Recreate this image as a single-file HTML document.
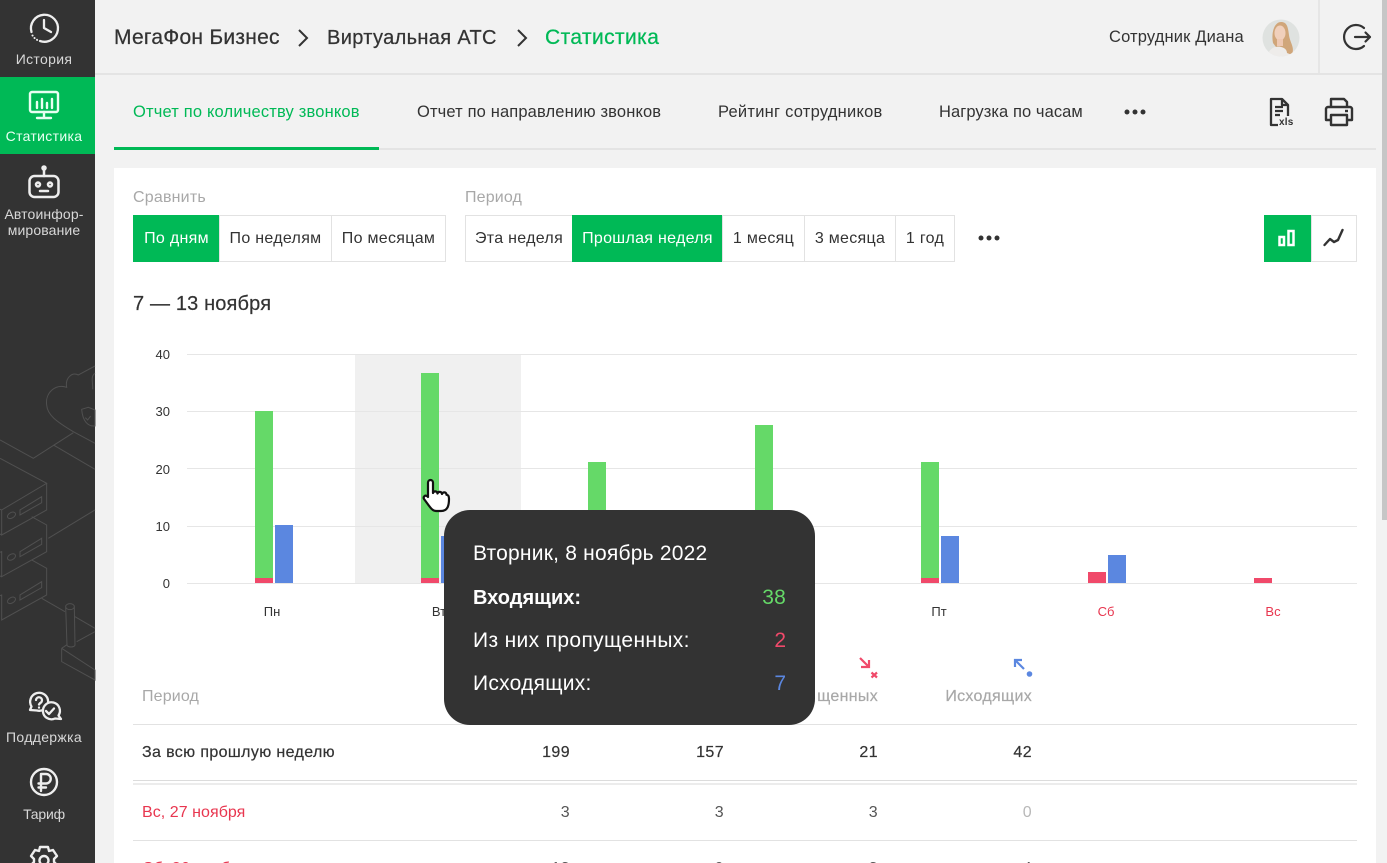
<!DOCTYPE html>
<html lang="ru"><head><meta charset="utf-8"><title>Статистика</title>
<style>
html,body{margin:0;padding:0;width:1387px;height:863px;overflow:hidden;background:#f2f2f2}
body{position:relative;font-family:"Liberation Sans",sans-serif;color:#333}
.t{position:absolute;white-space:nowrap;line-height:1}
.a{position:absolute}
.c{transform:translateX(-50%)}
.r{transform:translateX(-100%)}
.side{color:#d8d8d8;font-size:14px;letter-spacing:.32px}
.btn{position:absolute;top:215px;height:45px;border:1px solid #e2e2e2;background:#fff;box-sizing:content-box;font-size:16px;letter-spacing:.3px;line-height:45px;text-align:center;color:#333;white-space:nowrap}
.on{background:#00b956;border-color:#00b956;color:#fff}
.grid{position:absolute;left:187px;width:1170px;height:1px;background:#e6e6e6}
.b{position:absolute}
.g{background:#65d968}.bl{background:#5b87e0}.rd{background:#f0496a}
.yl{position:absolute;font-size:13px;line-height:1;color:#333;right:1217px}
.num{font-size:16px;letter-spacing:.4px}
svg{position:absolute;overflow:visible}
</style></head><body>

<!-- sidebar -->
<div class="a" style="left:0;top:0;width:95px;height:863px;background:#333"></div>
<div class="a" style="left:0;top:77px;width:95px;height:77px;background:#00b956"></div>
<svg style="left:0;top:350px" width="95" height="330" fill="none" stroke="#505050" stroke-width="1">
<g transform="scale(.3333)" stroke-width="3">
<path d="M285 48L235 75C215 65 195 85 200 112C165 100 135 130 140 165C142 195 170 215 220 245L285 280"/>
<path d="M285 70C270 80 280 100 278 118"/>
<path d="M245 178L265 172L285 180V228C265 230 248 215 245 178ZM256 203L263 210L272 198"/>
<path d="M0 270L100 325L220 248M160 285L285 358"/>
<path d="M0 325L140 400L5 480V555L140 480V400M5 480L0 478"/>
<path d="M60 480L125 440V458L60 495ZM23 502a13 8 -30 1 1 23 -12a13 8 -30 1 1 -23 12"/>
<path d="M95 500L140 525V605L5 680V605L0 607M5 555L0 552"/>
<path d="M60 605L125 565V583L60 620ZM23 627a13 8 -30 1 1 23 -12a13 8 -30 1 1 -23 12"/>
<path d="M145 565L285 480"/>
<path d="M95 630L140 655V735L5 810V735L0 737M5 680L0 678"/>
<path d="M60 735L125 695V713L60 750ZM23 757a13 8 -30 1 1 23 -12a13 8 -30 1 1 -23 12"/>
<path d="M125 745L195 785"/>
<path d="M197 770a13 9 0 0 1 26 0L225 885a12 6 0 0 1 -24 0ZM197 770a13 9 0 0 0 26 0"/>
<path d="M225 800L285 835M230 875L285 845"/>
<path d="M185 895L285 960V990L185 935V895M185 895L200 885"/>
</g>
</svg>
<svg style="left:29px;top:13px" width="30" height="30" fill="none" stroke="#eee" stroke-width="2.300" stroke-linecap="round" stroke-linejoin="round"><path d="M2.500 19A13.500 13.500 0 1 1 11 28"/><path d="M15 7V15L22 19"/><path d="M3.500 22.500l.1.1M5.500 25l.1.1M8 26.800l.1.1" stroke-width="2"/></svg>
<div class="t side c" style="left:44px;top:52px">История</div>
<svg style="left:28px;top:90px" width="32" height="30" fill="none" stroke="#e8fff2" stroke-width="2.400" stroke-linecap="round" stroke-linejoin="round"><rect x="2" y="2" width="28" height="20" rx="2"/><path d="M16 22V27M9 28H23M9 12V18M14 9V18M19 13V18M24 9V18"/></svg>
<div class="t side c" style="left:44px;top:129px;color:#e8fff2">Статистика</div>
<svg style="left:27px;top:165px" width="34" height="34" fill="none" stroke="#eee" stroke-width="2.500" stroke-linecap="round" stroke-linejoin="round"><rect x="2.500" y="11" width="29" height="21" rx="5"/><path d="M17 4V11M13 26H21"/><circle cx="17" cy="3" r="1.500" fill="#eee"/><circle cx="11" cy="19.500" r="2"/><circle cx="23" cy="19.500" r="2"/></svg>
<div class="t side c" style="left:44px;top:207px;letter-spacing:.13px">Автоинфор-</div>
<div class="t side c" style="left:44px;top:223px;letter-spacing:.13px">мирование</div>
<svg style="left:28px;top:692px" width="36" height="30" fill="none" stroke="#eee" stroke-width="2.300" stroke-linecap="round" stroke-linejoin="round"><path d="M2 18L3.500 14.500A9 9 0 1 1 9 18.500Z"/><path d="M8 8a3 3 0 1 1 4.200 3L11 12.500M11 15.500v.1"/><path d="M33 27L30.500 23.500A8.500 8.500 0 1 0 27 26.500Z" fill="#333"/><path d="M18 19l3 3 5-5.500"/></svg>
<div class="t side c" style="left:44px;top:730px">Поддержка</div>
<svg style="left:29px;top:767px" width="30" height="30" fill="none" stroke="#eee" stroke-width="2.400" stroke-linecap="round" stroke-linejoin="round"><circle cx="15" cy="15" r="13"/><path d="M12 24V7H17a4.500 4.500 0 0 1 0 9.500H9.500M9.500 20.500H17"/></svg>
<div class="t side c" style="left:44px;top:807px;letter-spacing:-.2px">Тариф</div>
<svg style="left:30px;top:846px" width="28" height="28" fill="none" stroke="#eee" stroke-width="2.400" stroke-linejoin="round"><path d="M10 1H18L19 5L23 4L27 10L24 13V16L27 19L23 25L19 24L18 28H10L9 24L5 25L1 19L4 16V13L1 10L5 4L9 5Z"/><circle cx="14" cy="14.500" r="4.500"/></svg>

<!-- header -->
<div class="a" style="left:95px;top:73px;width:1287px;height:2px;background:#e4e4e4"></div>
<div class="a" style="left:1318px;top:0;width:2px;height:73px;background:#e6e6e6"></div>
<div class="t" style="left:114px;top:27px;font-size:21px;letter-spacing:.25px;-webkit-text-stroke:.25px #333">МегаФон Бизнес</div>
<svg style="left:297px;top:29px" width="12" height="18" fill="none" stroke="#333" stroke-width="2"><path d="M2 1L10 9L2 17"/></svg>
<div class="t" style="left:327px;top:28px;font-size:20px;letter-spacing:.35px;-webkit-text-stroke:.25px #333">Виртуальная АТС</div>
<svg style="left:516px;top:29px" width="12" height="18" fill="none" stroke="#333" stroke-width="2"><path d="M2 1L10 9L2 17"/></svg>
<div class="t" style="left:545px;top:27px;font-size:21px;letter-spacing:.4px;color:#00b956;-webkit-text-stroke:.25px #00b956">Статистика</div>
<div class="t" style="left:1109px;top:29px;font-size:16.500px;letter-spacing:.15px">Сотрудник Диана</div>
<svg style="left:1262px;top:19px" width="38" height="38"><defs><clipPath id="av"><circle cx="19" cy="19" r="18.500"/></clipPath></defs><circle cx="19" cy="19" r="18.500" fill="#dfe2e0"/><g clip-path="url(#av)"><path d="M5 38C7 29 13 27 19 27S32 29 35 38Z" fill="#eeecea"/><path d="M11 24C9 12 13 3 19 3S26 8 27 16C28 24 33 28 30 36L25 34C25 28 16 27 14 28Z" fill="#d0a67a"/><ellipse cx="18" cy="14" rx="5.500" ry="7.500" fill="#f0d0bc"/><path d="M15 20L15 27H21L21 20Z" fill="#eec8b2"/></g></svg>
<svg style="left:1345px;top:24px" width="26" height="26" fill="none" stroke="#333" stroke-width="2.200" stroke-linecap="round" stroke-linejoin="round"><path d="M19 4A12 12 0 1 0 19 22M10 13H25M20.500 8.500L25 13L20.500 17.500"/></svg>

<!-- tabs -->
<div class="a" style="left:114px;top:148px;width:1262px;height:2px;background:#e4e4e4"></div>
<div class="a" style="left:114px;top:147px;width:265px;height:3px;background:#00b956"></div>
<div class="t" style="left:133px;top:104px;font-size:16.500px;color:#00b956;letter-spacing:.17px">Отчет по количеству звонков</div>
<div class="t" style="left:417px;top:104px;font-size:16.500px;letter-spacing:.14px">Отчет по направлению звонков</div>
<div class="t" style="left:718px;top:104px;font-size:16.500px;letter-spacing:.24px">Рейтинг сотрудников</div>
<div class="t" style="left:939px;top:104px;font-size:16.500px;letter-spacing:.08px">Нагрузка по часам</div>
<svg style="left:1124px;top:108px" width="24" height="8" fill="#333"><circle cx="3" cy="4" r="2.500"/><circle cx="11" cy="4" r="2.500"/><circle cx="19" cy="4" r="2.500"/></svg>
<svg style="left:1268px;top:97px" width="30" height="30" fill="none" stroke="#333" stroke-width="2.300" stroke-linejoin="round"><path d="M10 28H3V2H14L20 8V19"/><path d="M14 2V8H20M7 10H15M7 14H15M7 18H12"/></svg>
<div class="t" style="left:1279px;top:118px;font-size:10px;font-weight:bold;letter-spacing:.2px">xls</div>
<svg style="left:1324px;top:97px" width="30" height="30" fill="none" stroke="#333" stroke-width="2.400" stroke-linejoin="round"><path d="M7 10V2H20L23 5V10M7 23H2V12a2 2 0 0 1 2-2H26a2 2 0 0 1 2 2V23H23"/><rect x="7" y="18" width="16" height="10"/><path d="M21 14H24"/></svg>

<!-- card -->
<div class="a" style="left:114px;top:168px;width:1262px;height:695px;background:#fff"></div>
<div class="a" style="left:1382px;top:0;width:5px;height:520px;background:#c6c6c6"></div>

<div class="t" style="left:133px;top:190px;font-size:16px;color:#a8a8a8;letter-spacing:.2px">Сравнить</div>
<div class="t" style="left:465px;top:190px;font-size:16px;color:#a8a8a8;letter-spacing:.15px">Период</div>

<div class="btn on" style="left:133px;width:85px">По дням</div>
<div class="btn" style="left:219px;width:111px">По неделям</div>
<div class="btn" style="left:331px;width:113px">По месяцам</div>

<div class="btn" style="left:465px;width:106px">Эта неделя</div>
<div class="btn on" style="left:572px;width:149px">Прошлая неделя</div>
<div class="btn" style="left:722px;width:81px">1 месяц</div>
<div class="btn" style="left:804px;width:90px">3 месяца</div>
<div class="btn" style="left:895px;width:58px">1 год</div>
<svg style="left:978px;top:234px" width="24" height="8" fill="#333"><circle cx="3" cy="4" r="2.500"/><circle cx="11" cy="4" r="2.500"/><circle cx="19" cy="4" r="2.500"/></svg>

<div class="btn on" style="left:1264px;width:45px"></div>
<div class="btn" style="left:1311px;width:44px"></div>
<svg style="left:1278px;top:229px" width="18" height="18" fill="none" stroke="#fff" stroke-width="2.500"><rect x="1.500" y="8" width="4.500" height="8"/><rect x="10.500" y="2" width="5" height="14"/></svg>
<svg style="left:1323px;top:228px" width="22" height="20" fill="none" stroke="#333" stroke-width="2.400" stroke-linejoin="round" stroke-linecap="round"><path d="M1.500 17L7 11L11 14L15 12L19.500 2"/></svg>

<div class="t" style="left:133px;top:294px;font-size:20px;letter-spacing:.15px;-webkit-text-stroke:.2px #333">7 — 13 ноября</div>

<!-- chart -->
<div class="a" style="left:355px;top:354px;width:166px;height:229px;background:#f0f0f0"></div>
<div class="grid" style="top:354px"></div>
<div class="grid" style="top:411px"></div>
<div class="grid" style="top:468px"></div>
<div class="grid" style="top:526px"></div>
<div class="grid" style="top:583px"></div>
<div class="yl" style="top:348px">40</div>
<div class="yl" style="top:405px">30</div>
<div class="yl" style="top:463px">20</div>
<div class="yl" style="top:520px">10</div>
<div class="yl" style="top:577px">0</div>

<div class="b g" style="left:255px;top:411px;width:18px;height:172px"></div>
<div class="b rd" style="left:255px;top:578px;width:18px;height:5px"></div>
<div class="b bl" style="left:275px;top:525px;width:18px;height:58px"></div>
<div class="b g" style="left:421px;top:373px;width:18px;height:210px"></div>
<div class="b rd" style="left:421px;top:578px;width:18px;height:5px"></div>
<div class="b bl" style="left:441px;top:536px;width:18px;height:47px"></div>
<div class="b g" style="left:588px;top:462px;width:18px;height:121px"></div>
<div class="b g" style="left:755px;top:425px;width:18px;height:158px"></div>
<div class="b g" style="left:921px;top:462px;width:18px;height:121px"></div>
<div class="b rd" style="left:921px;top:578px;width:18px;height:5px"></div>
<div class="b bl" style="left:941px;top:536px;width:18px;height:47px"></div>
<div class="b rd" style="left:1088px;top:572px;width:18px;height:11px"></div>
<div class="b bl" style="left:1108px;top:555px;width:18px;height:28px"></div>
<div class="b rd" style="left:1254px;top:578px;width:18px;height:5px"></div>

<div class="t c" style="left:272px;top:605px;font-size:13px">Пн</div>
<div class="t c" style="left:439px;top:605px;font-size:13px">Вт</div>
<div class="t c" style="left:939px;top:605px;font-size:13px">Пт</div>
<div class="t c" style="left:1106px;top:605px;font-size:13px;color:#e8364f">Сб</div>
<div class="t c" style="left:1273px;top:605px;font-size:13px;color:#e8364f">Вс</div>

<!-- table -->
<svg style="left:859px;top:657px" width="22" height="22" fill="none" stroke="#f0496a" stroke-width="2.200"><path d="M1 1L10 10M10 3V10H2"/><path d="M12.500 15.500L18 20.500M18 15.500L12.500 20.500"/></svg>
<svg style="left:1012px;top:657px" width="22" height="22" fill="none" stroke="#5b87e0" stroke-width="2.200"><path d="M12 12L3 3M3 10V3H10"/><circle cx="17.500" cy="17" r="2.800" fill="#5b87e0" stroke="none"/></svg>
<div class="t" style="left:142px;top:689px;font-size:16px;color:#a8a8a8;letter-spacing:.15px">Период</div>
<div class="t r" style="left:878px;top:689px;font-size:16px;color:#a8a8a8;letter-spacing:.3px;-webkit-text-stroke:.2px #a8a8a8">щенных</div>
<div class="t r" style="left:1032px;top:689px;font-size:16px;color:#a8a8a8;letter-spacing:.3px;-webkit-text-stroke:.2px #a8a8a8">Исходящих</div>
<div class="a" style="left:133px;top:724px;width:1224px;height:1px;background:#e2e2e2"></div>
<div class="t" style="left:142px;top:745px;font-size:16px;-webkit-text-stroke:.2px #333;letter-spacing:.37px">За всю прошлую неделю</div>
<div class="t r num" style="left:570px;top:745px;-webkit-text-stroke:.2px #333">199</div>
<div class="t r num" style="left:724px;top:745px;-webkit-text-stroke:.2px #333">157</div>
<div class="t r num" style="left:878px;top:745px;-webkit-text-stroke:.2px #333">21</div>
<div class="t r num" style="left:1032px;top:745px;-webkit-text-stroke:.2px #333">42</div>
<div class="a" style="left:133px;top:780px;width:1224px;height:1px;background:#dcdcdc"></div>
<div class="a" style="left:133px;top:783px;width:1224px;height:2px;background:#ececec"></div>
<div class="t" style="left:142px;top:805px;font-size:16px;color:#e8364f;letter-spacing:.05px">Вс, 27 ноября</div>
<div class="t r num" style="left:570px;top:805px;color:#555">3</div>
<div class="t r num" style="left:724px;top:805px;color:#555">3</div>
<div class="t r num" style="left:878px;top:805px;color:#555">3</div>
<div class="t r num" style="left:1032px;top:805px;color:#b8b8b8">0</div>
<div class="a" style="left:133px;top:840px;width:1224px;height:1px;background:#e2e2e2"></div>
<div class="t" style="left:142px;top:861px;font-size:16px;color:#e8364f;letter-spacing:.05px">Сб, 26 ноября</div>
<div class="t r num" style="left:570px;top:861px;color:#555">13</div>
<div class="t r num" style="left:724px;top:861px;color:#555">9</div>
<div class="t r num" style="left:878px;top:861px;color:#555">3</div>
<div class="t r num" style="left:1032px;top:861px;color:#555">4</div>

<!-- tooltip -->
<div class="a" style="left:444px;top:510px;width:371px;height:215px;background:#333;border-radius:26px"></div>
<div class="t" style="left:473px;top:543px;font-size:21px;color:#fff;letter-spacing:.22px">Вторник, 8 ноябрь 2022</div>
<div class="t" style="left:473px;top:588px;font-size:20px;color:#fff;font-weight:bold">Входящих:</div>
<div class="t r" style="left:786px;top:587px;font-size:21px;letter-spacing:.2px;color:#65d968">38</div>
<div class="t" style="left:473px;top:630px;font-size:21px;color:#fff;letter-spacing:.35px">Из них пропущенных:</div>
<div class="t r" style="left:786px;top:630px;font-size:21px;color:#f0496a">2</div>
<div class="t" style="left:473px;top:673px;font-size:21px;color:#fff;letter-spacing:.25px">Исходящих:</div>
<div class="t r" style="left:786px;top:673px;font-size:21px;color:#5b87e0">7</div>

<!-- cursor -->
<svg style="left:422px;top:479px" width="30" height="34" stroke="#111" stroke-width="2.200" stroke-linejoin="round" stroke-linecap="round" fill="#fff"><path d="M6 3.500a2.500 2.500 0 0 1 5 0V14a2.300 2.300 0 0 1 4.500 0.500a2.300 2.300 0 0 1 4.500 0.500a2.300 2.300 0 0 1 4.500 0.800c2 0 2.500 2 2.500 4C27 26 26 32 19 32H14C10 32 8 28 2 20C1 18 3 15 6 18Z"/></svg>
</body></html>
